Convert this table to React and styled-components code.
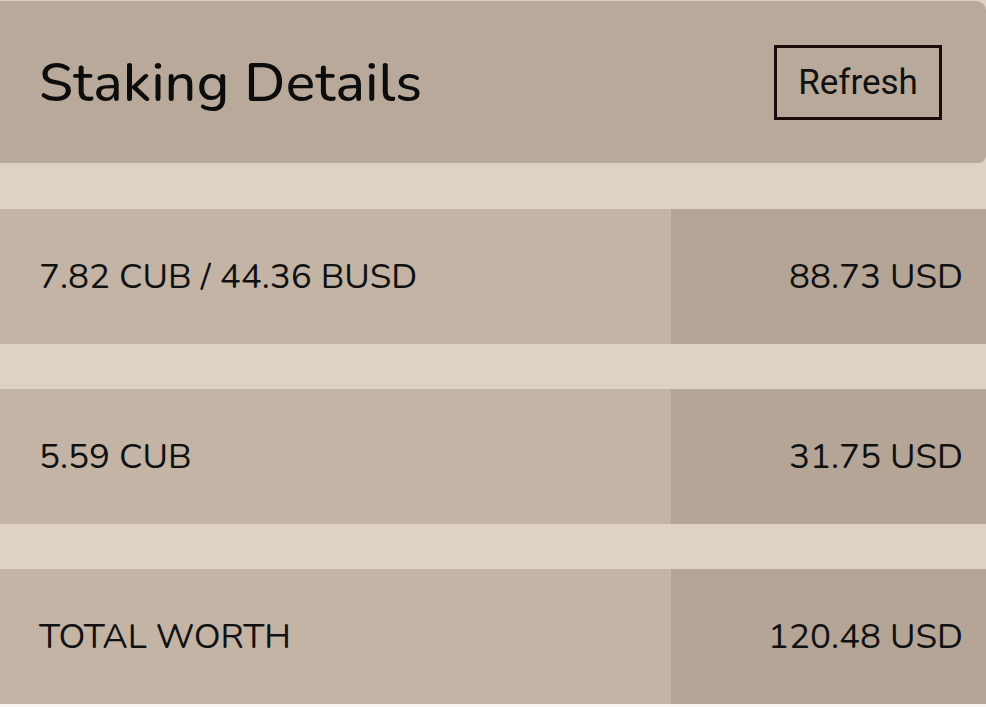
import styled, { createGlobalStyle } from "styled-components"

const GlobalStyle = createGlobalStyle`
	html, body {
		margin: 0;
		padding: 0;
		background: #faf6f1;
	}
	body {
		font-family: "Nunito", "Lato", "Liberation Sans", sans-serif;
		color: #111;
	}
`

const Page = styled.div`
	width: 986px;
	background: #ddd2c4;
	padding-top: 1px;
	display: flex;
	flex-direction: column;
	gap: 45px;
`

const Header = styled.div`
	height: 162px;
	margin-bottom: 1px;
	background: #b8a99a;
	border-radius: 0 10px 8px 0;
	display: flex;
	align-items: center;
	justify-content: space-between;
	padding: 0 44px 0 39px;
	box-sizing: border-box;
`

const Title = styled.h1`
	margin: 0;
	font-size: 55px;
	font-weight: 500;
	letter-spacing: 0.4px;
	color: #0c0c0c;
`

const RefreshButton = styled.button`
	width: 168px;
	height: 75px;
	border: 3px solid #1e0a0b;
	background: transparent;
	font-family: Roboto, "Liberation Sans", sans-serif;
	font-size: 35px;
	color: #111;
	padding: 0;
	cursor: pointer;
`

const Row = styled.div`
	height: 135px;
	display: grid;
	grid-template-columns: 671px 1fr;
`

const Cell = styled.div`
	display: flex;
	align-items: center;
	justify-content: ${(p) => (p.$right ? "flex-end" : "flex-start")};
	padding: ${(p) => (p.$right ? "0 23px 0 0" : "0 0 0 39px")};
	background: ${(p) => (p.$right ? "#b4a597" : "#c3b4a5")};
	font-size: 35px;
	color: #111;
`

const rows = [
	["7.82 CUB / 44.36 BUSD", "88.73 USD"],
	["5.59 CUB", "31.75 USD"],
	["TOTAL WORTH", "120.48 USD"],
]

const App = () => {
	return (
		<>
			<GlobalStyle />
			<Page>
				<Header>
					<Title>Staking Details</Title>
					<RefreshButton>Refresh</RefreshButton>
				</Header>
				{rows.map(([label, value]) => (
					<Row key={label}>
						<Cell>{label}</Cell>
						<Cell $right>{value}</Cell>
					</Row>
				))}
			</Page>
		</>
	)
}

export default App
